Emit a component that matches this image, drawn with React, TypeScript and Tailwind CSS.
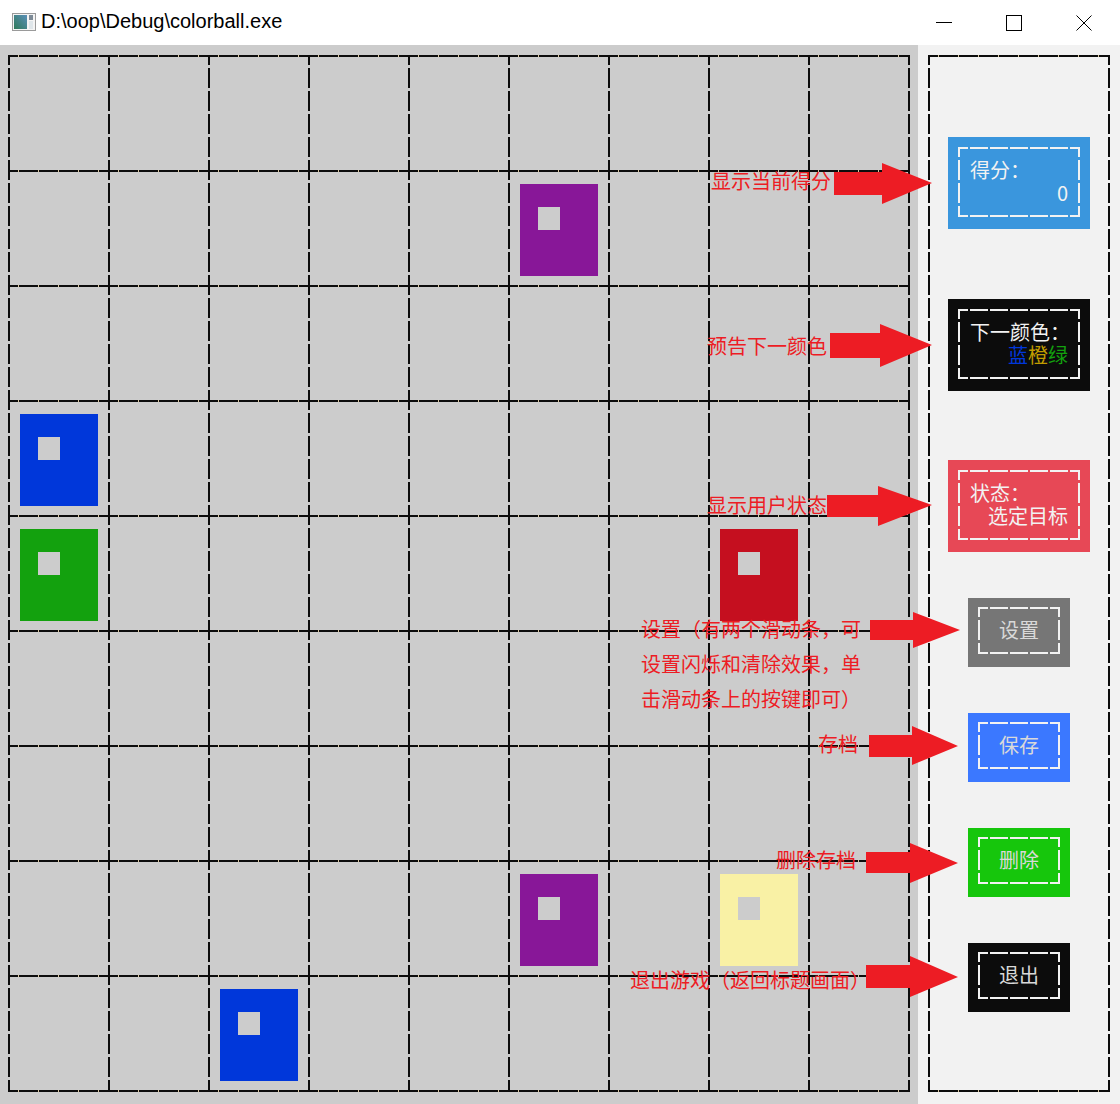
import React from "react";

const CELL =
  "[background-image:repeating-linear-gradient(90deg,#0c0c0c_0_10px,#d9c6a0_10px_11px,#0c0c0c_11px_20px),repeating-linear-gradient(180deg,#0c0c0c_0_10px,transparent_10px_13px,#0c0c0c_13px_23px)] [background-size:100%_2px,2px_100%] bg-no-repeat";

const BOARD_EDGE =
  "[background-image:repeating-linear-gradient(180deg,#0c0c0c_0_10px,transparent_10px_13px,#0c0c0c_13px_23px),repeating-linear-gradient(90deg,#0c0c0c_0_10px,#d9c6a0_10px_11px,#0c0c0c_11px_20px)] [background-size:2px_100%,100%_2px] [background-position:right_top,left_bottom] bg-no-repeat";

const PANEL_BORDER =
  "[background-image:repeating-linear-gradient(90deg,#0c0c0c_0_10px,#d9c6a0_10px_11px,#0c0c0c_11px_20px),repeating-linear-gradient(90deg,#0c0c0c_0_10px,#d9c6a0_10px_11px,#0c0c0c_11px_20px),repeating-linear-gradient(180deg,#0c0c0c_0_10px,transparent_10px_13px,#0c0c0c_13px_23px),repeating-linear-gradient(180deg,#0c0c0c_0_10px,transparent_10px_13px,#0c0c0c_13px_23px)] [background-size:100%_2px,100%_2px,2px_100%,2px_100%] [background-position:left_top,left_bottom,left_top,right_top] bg-no-repeat";

const FRAME =
  "[background-image:repeating-linear-gradient(90deg,#f2f2f2_0_10px,transparent_10px_12px,#f2f2f2_12px_20px),repeating-linear-gradient(90deg,#f2f2f2_0_10px,transparent_10px_12px,#f2f2f2_12px_20px),repeating-linear-gradient(180deg,#f2f2f2_0_10px,transparent_10px_13px,#f2f2f2_13px_23px),repeating-linear-gradient(180deg,#f2f2f2_0_10px,transparent_10px_13px,#f2f2f2_13px_23px)] [background-size:100%_2px,100%_2px,2px_100%,2px_100%] [background-position:left_top,left_bottom,left_top,right_top] bg-no-repeat";

type Ball = { r: number; c: number; cls: string };

const BALLS: Ball[] = [
  { r: 1, c: 5, cls: "bg-[#881798]" },
  { r: 3, c: 0, cls: "bg-[#0037da]" },
  { r: 4, c: 0, cls: "bg-[#13a10e]" },
  { r: 4, c: 7, cls: "bg-[#c50f1f]" },
  { r: 7, c: 5, cls: "bg-[#881798]" },
  { r: 7, c: 7, cls: "bg-[#f9f1a5]" },
  { r: 8, c: 2, cls: "bg-[#0037da]" },
];

function TitleBar() {
  return (
    <div className="h-[45px] bg-white flex items-start">
      <svg className="ml-[12px] mt-[13px]" width="24" height="18" viewBox="0 0 24 18">
        <defs>
          <linearGradient id="ig" x1="0" y1="1" x2="1" y2="0">
            <stop offset="0" stopColor="#2f7a5a" />
            <stop offset="1" stopColor="#5a8fb8" />
          </linearGradient>
        </defs>
        <rect x="0.5" y="0.5" width="23" height="17" fill="#f4f4f4" stroke="#9a9a9a" />
        <rect x="2" y="2" width="13" height="14" fill="url(#ig)" />
        <rect x="17" y="2" width="4" height="5" fill="#7d8a96" />
        <rect x="17" y="8" width="4" height="8" fill="#dfe6ea" />
      </svg>
      <div className="ml-[5px] mt-[11px] text-[20px] leading-[20px] text-black font-['Liberation_Sans',Arial,sans-serif] whitespace-nowrap">
        D:\oop\Debug\colorball.exe
      </div>
      <div className="ml-auto flex mr-[1px]">
        <div className="w-[70px] h-[45px] flex items-center justify-center">
          <svg width="16" height="16" viewBox="0 0 16 16">
            <line x1="0" y1="7.5" x2="16" y2="7.5" stroke="#000" strokeWidth="1" />
          </svg>
        </div>
        <div className="w-[70px] h-[45px] flex items-center justify-center">
          <svg width="16" height="16" viewBox="0 0 16 16">
            <rect x="0.5" y="0.5" width="15" height="15" fill="none" stroke="#000" strokeWidth="1" />
          </svg>
        </div>
        <div className="w-[70px] h-[45px] flex items-center justify-center">
          <svg width="16" height="16" viewBox="0 0 16 16">
            <line x1="0.5" y1="0.5" x2="15.5" y2="15.5" stroke="#000" strokeWidth="1" />
            <line x1="15.5" y1="0.5" x2="0.5" y2="15.5" stroke="#000" strokeWidth="1" />
          </svg>
        </div>
      </div>
    </div>
  );
}

function Board() {
  const cells = [];
  for (let r = 0; r < 9; r++) {
    for (let c = 0; c < 9; c++) {
      const ball = BALLS.find((b) => b.r === r && b.c === c);
      cells.push(
        <div key={`${r}-${c}`} className={`${CELL} pl-[12px] pt-[14px]`}>
          {ball && (
            <div className={`w-[78px] h-[92px] pl-[18px] pt-[23px] ${ball.cls}`}>
              <div className="w-[22px] h-[23px] bg-[#cccccc]" />
            </div>
          )}
        </div>
      );
    }
  }
  return (
    <div
      className={`grid grid-cols-[repeat(9,100px)] grid-rows-[repeat(9,115px)] w-[902px] h-[1037px] pr-[2px] pb-[2px] ${BOARD_EDGE}`}
    >
      {cells}
    </div>
  );
}

function BigBox({ bg, children }: { bg: string; children: React.ReactNode }) {
  return (
    <div className={`w-[142px] h-[92px] pt-[10px] px-[10px] ${bg}`}>
      <div className={`h-[70px] w-full flex flex-col justify-center px-[12px] pb-[3px] ${FRAME}`}>{children}</div>
    </div>
  );
}

function SmallBox({ bg, text, mt }: { bg: string; text: string; mt: string }) {
  return (
    <div className={`w-[102px] h-[69px] pt-[9px] px-[10px] ${bg} ${mt}`}>
      <div className={`h-[47px] w-full flex items-center justify-center pb-[2px] ${FRAME}`}>
        <span className="text-[20px] leading-[23px] text-[#d9d9d9] whitespace-nowrap">{text}</span>
      </div>
    </div>
  );
}

function Panel() {
  return (
    <div className={`w-[182px] h-[1037px] flex flex-col items-center pt-[82px] ${PANEL_BORDER}`}>
      <BigBox bg="bg-[#3a96dd]">
        <div className="text-[20px] leading-[23px] text-[#f2f2f2] whitespace-nowrap">得分：</div>
        <div className="text-[20px] leading-[23px] text-[#f2f2f2] text-right whitespace-nowrap">0</div>
      </BigBox>
      <div className="mt-[70px]">
        <BigBox bg="bg-[#0c0c0c]">
          <div className="text-[20px] leading-[23px] text-[#f2f2f2] whitespace-nowrap">下一颜色：</div>
          <div className="text-[20px] leading-[23px] text-right whitespace-nowrap">
            <span className="text-[#0037da]">蓝</span>
            <span className="text-[#c19c00]">橙</span>
            <span className="text-[#13a10e]">绿</span>
          </div>
        </BigBox>
      </div>
      <div className="mt-[69px]">
        <BigBox bg="bg-[#e74856]">
          <div className="text-[20px] leading-[23px] text-[#f2f2f2] whitespace-nowrap">状态：</div>
          <div className="text-[20px] leading-[23px] text-[#f2f2f2] text-right whitespace-nowrap">选定目标</div>
        </BigBox>
      </div>
      <SmallBox bg="bg-[#767676]" text="设置" mt="mt-[46px]" />
      <SmallBox bg="bg-[#3b78ff]" text="保存" mt="mt-[46px]" />
      <SmallBox bg="bg-[#16c60c]" text="删除" mt="mt-[46px]" />
      <SmallBox bg="bg-[#0c0c0c]" text="退出" mt="mt-[46px]" />
    </div>
  );
}

function arrow(x0: number, x1: number, tip: number, sy0: number, sy1: number, hy0: number, hy1: number, ty: number) {
  return `${x0},${sy0} ${x1},${sy0} ${x1},${hy0} ${tip},${ty} ${x1},${hy1} ${x1},${sy1} ${x0},${sy1}`;
}

function Overlay() {
  return (
    <>
      <svg className="absolute left-0 top-0 pointer-events-none" width="1120" height="1104" viewBox="0 0 1120 1104">
        <g fill="#ed1c24">
          <polygon points={arrow(834, 882, 932, 172, 195, 163, 204, 183)} />
          <polygon points={arrow(830, 880, 932, 333, 358, 324, 367, 345)} />
          <polygon points={arrow(827, 878, 932, 495, 517, 486, 526, 505)} />
          <polygon points={arrow(870, 913, 960, 620, 640, 612, 648, 630)} />
          <polygon points={arrow(869, 912, 958, 735, 757, 726, 765, 746)} />
          <polygon points={arrow(866, 910, 958, 852, 873, 843, 883, 863)} />
          <polygon points={arrow(866, 910, 958, 965, 988, 956, 997, 977)} />
        </g>
      </svg>
      <div className="absolute left-[711px] top-[171px] text-[20px] leading-[20px] text-[#ed1c24] whitespace-nowrap">显示当前得分</div>
      <div className="absolute left-[707px] top-[336px] text-[20px] leading-[20px] text-[#ed1c24] whitespace-nowrap">预告下一颜色</div>
      <div className="absolute left-[707px] top-[495px] text-[20px] leading-[20px] text-[#ed1c24] whitespace-nowrap">显示用户状态</div>
      <div className="absolute left-[641px] top-[611px] text-[20px] leading-[35px] text-[#ed1c24] whitespace-nowrap">
        <div>设置（有两个滑动条，可</div>
        <div>设置闪烁和清除效果，单</div>
        <div>击滑动条上的按键即可）</div>
      </div>
      <div className="absolute left-[818px] top-[734px] text-[20px] leading-[20px] text-[#ed1c24] whitespace-nowrap">存档</div>
      <div className="absolute left-[776px] top-[850px] text-[20px] leading-[20px] text-[#ed1c24] whitespace-nowrap">删除存档</div>
      <div className="absolute left-[630px] top-[970px] text-[20px] leading-[20px] text-[#ed1c24] whitespace-nowrap">退出游戏（返回标题画面）</div>
    </>
  );
}

export default function App() {
  return (
    <div className="relative w-[1120px] h-[1104px] overflow-hidden bg-white font-['Noto_Sans_CJK_SC','Noto_Sans',sans-serif]">
      <TitleBar />
      <div className="flex h-[1059px]">
        <div className="w-[918px] h-full bg-[#cccccc] pl-[8px] pt-[10px]">
          <Board />
        </div>
        <div className="flex-1 h-full bg-[#f2f2f2] pl-[10px] pt-[10px]">
          <Panel />
        </div>
      </div>
      <Overlay />
    </div>
  );
}
